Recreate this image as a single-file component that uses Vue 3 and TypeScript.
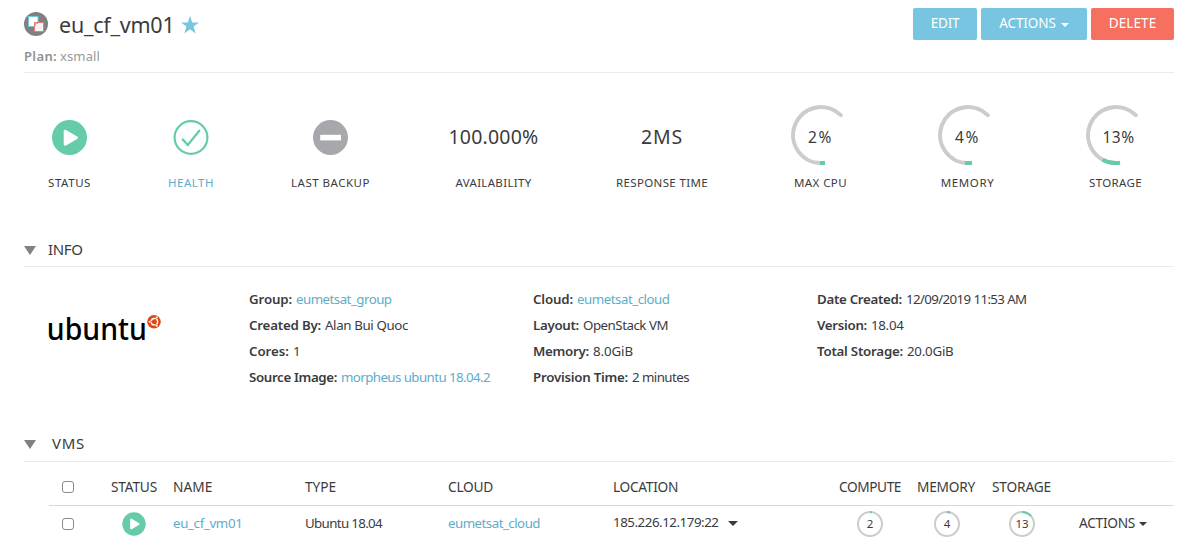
<script setup lang="ts">
import type { Directive } from 'vue'

interface Stat { label: string; kind: string; value?: string; w: number; lw: number; vw?: number; dash?: number }
interface Detail { label: string; value: string; link?: boolean; lw: number; vw: number }
interface Column { label: string; w: number }

// Tracks the text out or in so that a label fills the given width.
const vFit: Directive<HTMLElement, number> = {
  mounted(el, { value }) {
    const natural = el.getBoundingClientRect().width
    const count = (el.textContent ?? '').trim().length
    el.style.letterSpacing = `${(value - natural) / count}px`
  },
}

const stats: Stat[] = [
  { label: 'STATUS', kind: 'play', w: 43, lw: 43 },
  { label: 'HEALTH', kind: 'check', w: 44, lw: 46 },
  { label: 'LAST BACKUP', kind: 'minus', w: 79, lw: 79 },
  { label: 'AVAILABILITY', kind: 'text', value: '100.000%', w: 91, lw: 76, vw: 90 },
  { label: 'RESPONSE TIME', kind: 'text', value: '2MS', w: 90, lw: 92, vw: 42 },
  { label: 'MAX CPU', kind: 'gauge', value: '2%', w: 71, lw: 53, vw: 25, dash: 5 },
  { label: 'MEMORY', kind: 'gauge', value: '4%', w: 67, lw: 53.5, vw: 25, dash: 7 },
  { label: 'STORAGE', kind: 'gauge', value: '13%', w: 73, lw: 53, vw: 32, dash: 18 },
]

const details: Detail[][] = [
  [
    { label: 'Group:', value: 'eumetsat_group', link: true, lw: 43, vw: 95.5 },
    { label: 'Created By:', value: 'Alan Bui Quoc', lw: 72, vw: 83 },
    { label: 'Cores:', value: '1', lw: 40, vw: 7 },
    { label: 'Source Image:', value: 'morpheus ubuntu 18.04.2', link: true, lw: 88, vw: 149 },
  ],
  [
    { label: 'Cloud:', value: 'eumetsat_cloud', link: true, lw: 40, vw: 92.5 },
    { label: 'Layout:', value: 'OpenStack VM', lw: 46, vw: 85 },
    { label: 'Memory:', value: '8.0GiB', lw: 56, vw: 40 },
    { label: 'Provision Time:', value: '2 minutes', lw: 95, vw: 57 },
  ],
  [
    { label: 'Date Created:', value: '12/09/2019 11:53 AM', lw: 85, vw: 120.5 },
    { label: 'Version:', value: '18.04', lw: 50, vw: 32.5 },
    { label: 'Total Storage:', value: '20.0GiB', lw: 86, vw: 46.5 },
  ],
]

const columns: Column[] = [
  { label: 'STATUS', w: 46 },
  { label: 'NAME', w: 39.5 },
  { label: 'TYPE', w: 31 },
  { label: 'CLOUD', w: 45 },
  { label: 'LOCATION', w: 65 },
  { label: 'COMPUTE', w: 62 },
  { label: 'MEMORY', w: 58 },
  { label: 'STORAGE', w: 59 },
]

const usage = [
  { value: '2', dash: 2 },
  { value: '4', dash: 3.2 },
  { value: '13', dash: 10 },
]
</script>

<template>
  <main class="page">
    <header class="header">
      <div>
        <div class="title-row">
          <svg class="app-icon" width="24" height="24" viewBox="0 0 24 24">
            <circle cx="12" cy="12" r="12" fill="#808080" />
            <rect x="4.5" y="4.5" width="9.5" height="10" fill="#fff" stroke="#77c5e0" />
            <rect x="10.5" y="10.5" width="9" height="9" fill="#f4f4f4" stroke="#ec7c70" />
            <path d="M11.5 14V11.5h2.5" fill="none" stroke="#77c5e0" />
          </svg>
          <h1><span v-fit="115.5">eu_cf_vm01</span></h1>
          <svg class="star" width="18" height="18" viewBox="0 0 18 18">
            <path d="M9 0l2.2 6.4H18l-5.4 4.1 2 6.9L9 13.3l-5.6 4.1 2-6.9L0 6.4h6.8z" fill="#77c5e0" />
          </svg>
        </div>
        <p class="plan"><b v-fit="33">Plan:</b><span v-fit="40">xsmall</span></p>
      </div>
      <div class="buttons">
        <button class="btn edit"><span v-fit="28.5">EDIT</span></button>
        <button class="btn more"><span v-fit="56.5">ACTIONS</span><i class="caret" /></button>
        <button class="btn delete"><span v-fit="47.5">DELETE</span></button>
      </div>
    </header>

    <section class="stats">
      <div v-for="s in stats" :key="s.label" class="stat" :style="{ width: s.w + 'px' }">
        <div class="visual">
          <svg v-if="s.kind === 'play'" width="35" height="35" viewBox="0 0 35 35">
            <circle cx="17.5" cy="17.5" r="17.5" fill="#66cba9" />
            <path d="M13.2 11.2v13l11.2-6.5z" fill="#fff" stroke="#fff" stroke-width="3" stroke-linejoin="round" />
          </svg>
          <svg v-else-if="s.kind === 'check'" width="36" height="35" viewBox="0 0 36 35">
            <circle cx="18" cy="17.5" r="16.4" fill="none" stroke="#66cba9" stroke-width="2.2" />
            <path d="M9.8 19.4l5 5.6L26.3 10.8" fill="none" stroke="#66cba9" stroke-width="2.3" stroke-linecap="round" />
          </svg>
          <svg v-else-if="s.kind === 'minus'" width="35" height="35" viewBox="0 0 35 35">
            <circle cx="17.5" cy="17.5" r="17.5" fill="#a7a8ac" />
            <rect x="7.2" y="14.8" width="20.8" height="5.6" fill="#fff" />
          </svg>
          <span v-else-if="s.kind === 'text'" v-fit="s.vw!" class="big">{{ s.value }}</span>
          <div v-else class="gauge">
            <svg width="60" height="60" viewBox="0 0 60 60">
              <path class="track" d="M32 58A28 28 0 1 1 49.8 10.2" />
              <path class="fill" d="M34 57.8A28 28 0 0 1 2 30" :stroke-dasharray="`${s.dash} 200`" />
            </svg>
            <span class="reading" :class="{ wide: s.value!.length > 2 }"><span v-fit="s.vw!">{{ s.value }}</span></span>
          </div>
        </div>
        <div class="stat-label" :class="{ link: s.kind === 'check' }"><span v-fit="s.lw">{{ s.label }}</span></div>
      </div>
    </section>

    <h2 class="info-title"><i class="toggle" /><span v-fit="34.5">INFO</span></h2>

    <section class="info">
      <svg class="logo" width="116" height="40" viewBox="0 0 116 40">
        <text x="-1.2" y="34" textLength="100" lengthAdjust="spacingAndGlyphs">ubuntu</text>
        <circle cx="106" cy="15.7" r="6.8" fill="#dd4814" />
        <circle cx="106.4" cy="15.7" r="3.2" fill="none" stroke="#fff" stroke-width="1.4" />
        <path d="M106.4 15.7h-5M106.4 15.7l2.5-4.3M106.4 15.7l2.5 4.3" stroke="#dd4814" stroke-width="1" />
        <circle cx="101.7" cy="15.7" r="1" fill="#fff" />
        <circle cx="108.7" cy="11.6" r="1" fill="#fff" />
        <circle cx="108.7" cy="19.8" r="1" fill="#fff" />
      </svg>
      <ul v-for="(group, i) in details" :key="i">
        <li v-for="d in group" :key="d.label">
          <b v-fit="d.lw">{{ d.label }}</b><span v-fit="d.vw" :class="{ link: d.link }">{{ d.value }}</span>
        </li>
      </ul>
    </section>

    <h2 class="vms-title"><i class="toggle" /><span v-fit="33">VMS</span></h2>

    <section class="table">
      <div class="row head">
        <div class="pick"><i class="checkbox" /></div>
        <div v-for="c in columns" :key="c.label"><span v-fit="c.w">{{ c.label }}</span></div>
      </div>
      <div class="row">
        <div class="pick"><i class="checkbox" /></div>
        <div class="state">
          <svg width="24" height="24" viewBox="0 0 36 36">
            <circle cx="18" cy="18" r="17.5" fill="#66cba9" />
            <path d="M13.7 11.5v13l11.2-6.5z" fill="#fff" stroke="#fff" stroke-width="3" stroke-linejoin="round" />
          </svg>
        </div>
        <div class="cell link"><span v-fit="69.5">eu_cf_vm01</span></div>
        <div class="cell"><span v-fit="77">Ubuntu 18.04</span></div>
        <div class="cell link"><span v-fit="92">eumetsat_cloud</span></div>
        <div class="cell address"><span v-fit="105.5">185.226.12.179:22</span><i class="caret large" /></div>
        <div v-for="u in usage" :key="u.value" class="usage">
          <div class="mini">
            <svg width="26" height="26" viewBox="0 0 26 26">
              <circle cx="13" cy="13" r="12" fill="none" stroke="#ccc" stroke-width="2" />
              <path d="M13 1A12 12 0 0 1 25 13" fill="none" stroke="#66cba9" stroke-width="2" :stroke-dasharray="`${u.dash} 90`" />
            </svg>
            <span class="reading">{{ u.value }}</span>
          </div>
        </div>
        <div class="cell menu"><span v-fit="56">ACTIONS</span><i class="caret" /></div>
      </div>
    </section>
  </main>
</template>

<style>
body { margin: 0; background: #fff; }
</style>

<style scoped>
.page { box-sizing: border-box; width: 1194px; height: 548px; padding: 0 20px 0 24px; overflow: hidden; color: #3b3b3d; font: 13px/20px "Noto Sans", "Open Sans", sans-serif; white-space: nowrap; }
h1, h2, p, ul { margin: 0; padding: 0; font-weight: 400; }
b { font-weight: 600; }
.link { color: #5dadca; }
.header { display: flex; justify-content: space-between; box-sizing: border-box; height: 73px; border-bottom: 1px solid #ebebeb; }
.title-row { display: flex; align-items: center; height: 48px; }
h1 { width: 114px; margin: 1px 7.5px 0 11px; font-size: 21.5px; line-height: 28px; }
.star { margin-top: 2px; }
.plan { display: flex; gap: 3px; height: 18px; margin-top: -1px; color: #999; line-height: 18px; }
.plan b { color: #919191; }
.buttons { display: flex; gap: 4px; padding-top: 8px; }
.btn { display: flex; align-items: center; justify-content: center; height: 32px; padding: 0 0 2px; border: 0; border-radius: 2px; background: #77c5e0; color: #fff; font: inherit; font-size: 13.5px; }
.edit { width: 64px; }
.more { width: 106px; }
.delete { width: 83px; background: #f5705f; }
.caret { display: inline-block; width: 0; height: 0; margin-left: 4px; border: 4px solid transparent; border-top-color: currentColor; border-bottom: 0; vertical-align: middle; }
.btn .caret { margin: 4px 0 0 5px; }
.caret.large { border-width: 5px 5px 0; margin-left: 9px; }
.stats { display: flex; gap: 78px; height: 163px; padding-left: 24px; }
.stat { display: flex; flex: none; flex-direction: column; align-items: center; }
.visual { display: flex; align-items: center; justify-content: center; height: 73px; padding-top: 28px; }
.visual > svg { margin-bottom: 1px; }
.big { margin-bottom: 1px; font-size: 19.5px; }
.gauge { position: relative; width: 60px; height: 60px; margin-top: -5px; }
.gauge svg, .mini svg { display: block; }
.gauge path { fill: none; stroke-width: 4; stroke-linecap: round; }
.track { stroke: #ccc; }
.gauge .fill { stroke: #66cba9; stroke-linecap: butt; }
.reading { position: absolute; inset: 0; display: flex; align-items: center; justify-content: center; }
.gauge .reading { top: 3px; font-size: 15.5px; }
.gauge .wide { left: 6px; }
.stat-label { height: 18px; font-size: 11.5px; line-height: 17px; }
h2 { display: flex; align-items: center; box-sizing: border-box; font-size: 15px; line-height: 20px; border-bottom: 1px solid #ebebeb; }
.info-title { height: 31px; padding-bottom: 4px; }
.vms-title { height: 34px; padding-bottom: 3px; }
.toggle { width: 0; height: 0; margin: 3px 12px 0 0; border: 6px solid transparent; border-top: 9px solid #808184; border-bottom: 0; }
.vms-title .toggle { margin-right: 16px; }
.info { display: grid; grid-template-columns: 201px 284px 284px 284px; height: 142px; padding: 19px 0 0 24px; }
.logo { margin-top: 20px; overflow: visible; }
.logo text { fill: #000; font: 500 31.5px "Noto Sans", sans-serif; }
ul { list-style: none; }
li { display: flex; gap: 4px; height: 26px; line-height: 26px; font-size: 13.3px; }
.table { margin-left: 25px; }
.row { display: grid; grid-template-columns: 62px 62px 132px 143px 165px 226px 78px 75px 87px 95px; align-items: center; height: 36px; font-size: 13.3px; }
.head { box-sizing: border-box; height: 44px; padding-top: 7px; border-bottom: 1px solid #d9d9d9; font-size: 13.7px; }
.cell { padding-bottom: 2px; }
.pick { padding-left: 13px; }
.checkbox { display: block; box-sizing: border-box; width: 12px; height: 12px; border: 1px solid #8c8c8c; border-radius: 3px; background: #fff; }
.state { padding-left: 11px; }
.state svg { display: block; }
.address { padding-bottom: 4px; }
.menu { font-size: 13.7px; }
.usage { padding-left: 17px; }
.address + .usage { padding-left: 18px; }
.mini { position: relative; width: 26px; height: 26px; }
.mini .reading { font-size: 11.5px; }
</style>
